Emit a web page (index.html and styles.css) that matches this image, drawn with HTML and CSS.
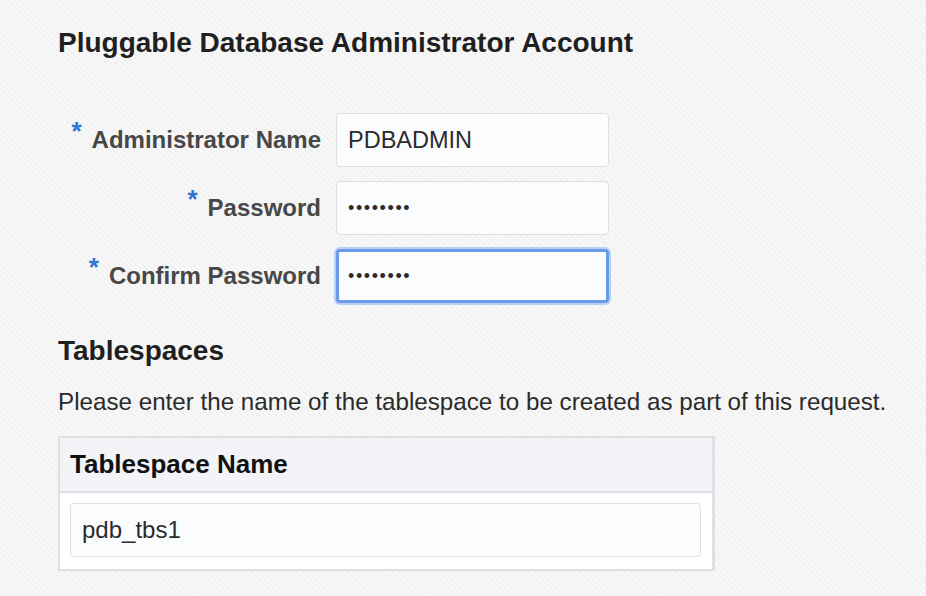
FILE: index.html
```html
<!DOCTYPE html>
<html>
<head>
<meta charset="utf-8">
<link rel="stylesheet" href="styles.css">
</head>
<body>
<div class="page">
  <h2 class="title">Pluggable Database Administrator Account</h2>
  <div class="form">
    <div class="row">
      <label class="label"><span class="req">*</span>Administrator Name</label>
      <div class="input">PDBADMIN</div>
    </div>
    <div class="row">
      <label class="label"><span class="req">*</span>Password</label>
      <div class="input dots">••••••••</div>
    </div>
    <div class="row">
      <label class="label"><span class="req">*</span>Confirm Password</label>
      <div class="input dots focus">••••••••</div>
    </div>
  </div>
  <h3 class="subtitle">Tablespaces</h3>
  <p class="desc">Please enter the name of the tablespace to be created as part of this request.</p>
  <div class="table">
    <div class="thead">Tablespace Name</div>
    <div class="tbody">
      <div class="input wide">pdb_tbs1</div>
    </div>
  </div>
</div>
</body>
</html>
```

FILE: styles.css
```css
html, body {
  margin: 0;
  padding: 0;
}
body {
  width: 926px;
  height: 596px;
  overflow: hidden;
  font-family: "Liberation Sans", Arial, sans-serif;
  background-color: #f7f7f7;
  background-image: repeating-linear-gradient(45deg, #f8f8f8 0px, #f8f8f8 2px, #f2f2f2 2px, #f2f2f2 4px);
  color: #2b2b2b;
}
.page {
  padding: 27px 0 0 58px;
}
.title {
  margin: 0;
  font-size: 28px;
  font-weight: bold;
  color: #1f1f1f;
  line-height: 32px;
}
.form {
  margin-top: 54px;
  display: flex;
  flex-direction: column;
  gap: 14px;
}
.row {
  display: flex;
  align-items: center;
}
.label {
  width: 263px;
  text-align: right;
  font-size: 24px;
  line-height: 28px;
  font-weight: bold;
  color: #474747;
  padding-right: 15px;
  padding-bottom: 2px;
  white-space: nowrap;
}
.req {
  color: #2e74d2;
  font-size: 26px;
  position: relative;
  top: -8px;
  margin-right: 10px;
}
.input {
  box-sizing: border-box;
  width: 273px;
  height: 54px;
  background: #fbfcfe;
  border: 1px solid #dcdee1;
  border-radius: 4px;
  padding: 0 11px;
  display: flex;
  align-items: center;
  font-size: 23.5px;
  color: #2b2b2b;
}
.dots {
  font-size: 18px;
  letter-spacing: 1.6px;
}
.focus {
  border: 3px solid #6a9ae9;
  box-shadow: 0 0 0 2px #b9d0f5;
  padding-left: 9px;
}
.subtitle {
  margin: 32px 0 0 0;
  font-size: 28px;
  font-weight: bold;
  color: #1f1f1f;
  line-height: 32px;
}
.desc {
  margin: 21px 0 0 0;
  font-size: 24.2px;
  line-height: 28px;
  color: #2b2b2b;
  white-space: nowrap;
}
.table {
  margin-top: 20px;
  width: 657px;
  box-sizing: border-box;
  border: 2px solid #dcdfe3;
  border-right-width: 3px;
}
.thead {
  background: #f2f4f7;
  height: 53px;
  border-bottom: 2px solid #dcdfe3;
  padding-left: 10px;
  display: flex;
  align-items: center;
  font-size: 26px;
  font-weight: bold;
  color: #111;
}
.tbody {
  background: #fff;
  padding: 10px 11px 12px 10px;
}
.wide {
  width: 100%;
  height: 54px;
  font-size: 24px;
}
```
